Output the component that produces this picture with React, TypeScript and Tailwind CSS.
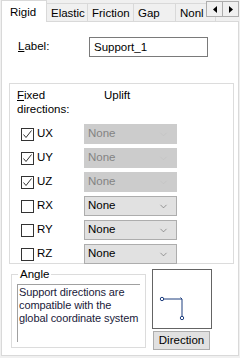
import { ChevronDown } from 'lucide-react';

const rows = [
  { id: 'UX', checked: true },
  { id: 'UY', checked: true },
  { id: 'UZ', checked: true },
  { id: 'RX', checked: false },
  { id: 'RY', checked: false },
  { id: 'RZ', checked: false },
];

const tabs = [
  { name: 'Elastic', w: 'w-[41px]' },
  { name: 'Friction', w: 'w-[46px]' },
  { name: 'Gap', w: 'w-[42px]' },
  { name: 'Nonl', w: 'w-[40px]' },
];

const CheckBox = ({ checked }: { checked: boolean }) => (
  <div className="w-[13px] h-[13px] border border-[#333] bg-white flex items-center justify-center">
    {checked && (
      <svg width="11" height="11" viewBox="0 0 11 11">
        <path d="M1.5 5.5 L4 8.5 L9.5 1.5" fill="none" stroke="#333" strokeWidth="1" />
      </svg>
    )}
  </div>
);

const App = () => {
  return (
    <div className="w-[240px] h-[358px] bg-[#f0f0f0] font-['Liberation_Sans',Arial,sans-serif] text-[11.5px] text-black overflow-hidden">
      {/* Tabs */}
      <div className="flex items-end h-[22px] pl-[1px] relative">
        <div className="w-[46px] h-[22px] bg-white border border-b-0 border-[#d9d9d9] pl-[8px] pt-[3px] leading-[16px] z-10 shrink-0">
          Rigid
        </div>
        {tabs.map((t) => (
          <div
            key={t.name}
            className={`${t.w} h-[19px] border border-l-0 border-b-0 border-[#d9d9d9] pl-[4px] leading-[19px] shrink-0 whitespace-nowrap`}
          >
            {t.name}
          </div>
        ))}
        <div className="absolute right-[1px] top-[1px] flex z-20">
          <div className="w-[17px] h-[16px] border border-[#adadad] bg-[#f0f0f0] flex items-center justify-center">
            <svg width="4" height="7" viewBox="0 0 4 7"><path d="M4 0 L0 3.5 L4 7 Z" fill="#000" /></svg>
          </div>
          <div className="w-[16px] h-[16px] border border-l-0 border-[#adadad] bg-[#f0f0f0] flex items-center justify-center">
            <svg width="4" height="7" viewBox="0 0 4 7"><path d="M0 0 L4 3.5 L0 7 Z" fill="#000" /></svg>
          </div>
        </div>
      </div>

      {/* Panel */}
      <div className="mx-[1px] -mt-[1px] h-[335px] bg-white border border-[#d9d9d9] flex flex-col">
        <div className="flex items-center mt-[15px] h-[20px]">
          <span className="ml-[16px] w-[71px]">
            <span className="underline">L</span>abel:
          </span>
          <div className="w-[119px] h-[20px] border border-[#7a7a7a] pl-[4px] leading-[18px]">Support_1</div>
        </div>

        {/* Fixed directions group */}
        <div className="ml-[7px] w-[225px] mt-[26px] h-[181px] border border-[#dcdcdc] flex flex-col">
          <div className="flex mt-[4px] leading-[14px]">
            <div className="ml-[7px] w-[87px]">
              <div>
                <span className="underline">F</span>ixed
              </div>
              <div>directions:</div>
            </div>
            <div>Uplift</div>
          </div>
          <div className="flex flex-col gap-[4px] mt-[8px]">
            {rows.map((r) => (
              <div key={r.id} className="flex items-center h-[20px]">
                <div className="ml-[11px]">
                  <CheckBox checked={r.checked} />
                </div>
                <span className="ml-[3px] w-[47px]">{r.id}</span>
                <div
                  className={`w-[93px] h-[20px] border flex items-center justify-between pl-[3px] pr-[7px] ${
                    r.checked
                      ? 'bg-[#cccccc] border-[#cccccc] text-[#838383]'
                      : 'bg-[#e1e1e1] border-[#adadad] text-black'
                  }`}
                >
                  <span>None</span>
                  <ChevronDown
                    size={11}
                    strokeWidth={1.2}
                    className={r.checked ? 'text-[#bfbfbf]' : 'text-[#555]'}
                  />
                </div>
              </div>
            ))}
          </div>
        </div>

        {/* Bottom */}
        <div className="flex mt-[5px] ml-[9px]">
          <div className="relative w-[135px] h-[74px] mt-[5px] border border-[#dcdcdc]">
            <span className="absolute -top-[9px] left-[6px] bg-white px-[2px] leading-[16px]">Angle</span>
            <div className="ml-[5px] mt-[9px] w-[123px] h-[58px] border-t border-l border-[#a0a0a0] pl-[1px] pt-[1px] text-[11px] tracking-[-0.1px] leading-[13px] text-[#1a1a3a]">
              Support directions are compatible with the global coordinate system
            </div>
          </div>
          <div className="ml-[6px] flex flex-col">
            <div className="w-[60px] h-[60px] border border-[#646464] bg-white">
              <svg width="58" height="58" viewBox="0 0 58 58">
                <path d="M10 29 H29 V48" fill="none" stroke="#1f3f7f" strokeWidth="1" />
                <circle cx="9" cy="29" r="1.7" fill="white" stroke="#1f3f7f" strokeWidth="1" />
                <circle cx="29" cy="48" r="1.7" fill="white" stroke="#1f3f7f" strokeWidth="1" />
                <path d="M27.5 27.5 L29 29" stroke="#1f3f7f" strokeWidth="1" />
              </svg>
            </div>
            <div className="mt-[2px] ml-[1px] w-[57px] h-[19px] bg-[#e1e1e1] border border-[#adadad] text-center leading-[17px]">
              Direction
            </div>
          </div>
        </div>
      </div>
    </div>
  );
};

export default App;
